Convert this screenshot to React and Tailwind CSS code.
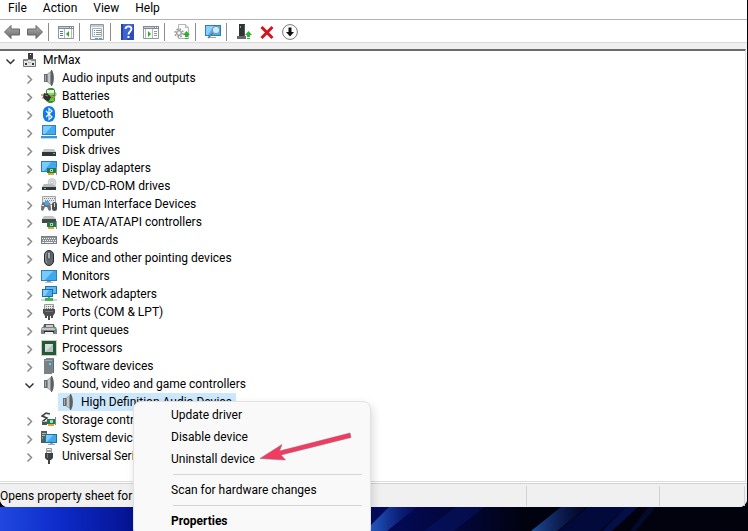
import React, { useState } from 'react';

const Svg = ({ children }) => (
  <svg viewBox="0 0 16 16" className="w-4 h-4 shrink-0" aria-hidden="true">
    {children}
  </svg>
);

const ComputerRootIcon = () => (
  <Svg>
    <path d="M6 1h5v6H6z" fill="#3c3f42" />
    <path d="M8 2h1v1H8z" fill="#e8e8e8" />
    <path d="M1.500 7.500h12v7h-12z" fill="#e4e4e4" stroke="#777" />
    <path d="M2 7h4v2H2zM9 7h4v2H9z" fill="#8b8b8b" />
    <path d="M3 11h2v2H3zM10 11h2v2h-2z" fill="#333" />
    <path d="M6 10h3v1H6z" fill="#bbb" />
  </Svg>
);

const SpeakerIcon = () => (
  <Svg>
    <path d="M3 4h4v8H3z" fill="#666d72" />
    <path d="M4 5h1v6H4z" fill="#a8adb0" />
    <path d="M6 4l5-4v16l-5-4z" fill="#8c8f91" />
    <path d="M7 4l2-2v12l-2-2z" fill="#c4c6c8" />
    <path d="M10 0h1c2.500 4 2.500 12 0 16h-1z" fill="#5d6063" />
  </Svg>
);

const BatteryIcon = () => (
  <Svg>
    <path d="M5 2l3-2h4l2 2v11l-3 2H8l-3-2z" fill="#3f8d35" />
    <path d="M6 2h7v3H6z" fill="#e3efe0" />
    <path d="M7 5h6v2H7z" fill="#7dde4f" />
    <path d="M8 10h5v3H8z" fill="#67c83f" />
    <path d="M13 4c3 0 2 5 0 5" fill="none" stroke="#6a8b6a" />
    <path d="M0 7h4M1 10h3M8 9c3-3 4 1 6 0" stroke="#c79b50" strokeWidth="1.4" fill="none" />
    <path d="M3 5l4 1 3 3-2 4-4-1-2-3z" fill="#2f2f2f" />
    <path d="M4 7l3 1" stroke="#858585" />
  </Svg>
);

const BluetoothIcon = () => (
  <Svg>
    <rect x="2" y="0" width="12" height="16" rx="6" fill="#0a7be8" />
    <path d="M5 5l6 6-3 2.5v-11L11 5l-6 6" fill="none" stroke="#fff" strokeWidth="1.1" />
  </Svg>
);

const MonitorIcon = () => (
  <Svg>
    <path d="M0 2h16v11H0z" fill="#2b7fb6" />
    <path d="M1 3h14v9H1z" fill="#3fa9f0" />
    <path d="M1 3h11L4 12H1z" fill="#79caff" />
    <path d="M6 13h4v1H6z" fill="#8c9ba5" />
    <path d="M4 14h8v1H4z" fill="#b7c2c9" />
  </Svg>
);

const ComputerIcon = () => (
  <Svg>
    <path d="M1 1h14v10H1z" fill="#2b83bd" />
    <path d="M2 2h12v8H2z" fill="#42aaf0" />
    <path d="M2 2h9l-7 8H2z" fill="#7ccbff" />
    <path d="M0 12h16v2H0z" fill="#3b95d0" />
    <path d="M0 14h16v1H0z" fill="#b9dcf2" />
  </Svg>
);

const DiskIcon = () => (
  <Svg>
    <path d="M3 7h10l2 3H1z" fill="#c2c4c5" />
    <path d="M1 10h14v4H1z" fill="#333638" />
    <path d="M12 11h2v1h-2z" fill="#42d64a" />
  </Svg>
);

const CardPart = () => (
  <>
    <path d="M6 8h9v5H6z" fill="#1f7a4c" />
    <path d="M9 9h3v3H9z" fill="#9fd6b6" />
    <path d="M10 10h1v1h-1z" fill="#1c4d35" />
    <path d="M7 13h6v2H7z" fill="#e0a23a" />
    <path d="M15 7h1v8h-1z" fill="#8c969b" />
  </>
);

const DisplayIcon = () => (
  <Svg>
    <path d="M0 1h16v11H0z" fill="#2b7fb6" />
    <path d="M1 2h14v9H1z" fill="#3fa9f0" />
    <path d="M1 2h9L3 11H1z" fill="#79caff" />
    <CardPart />
  </Svg>
);

const DvdIcon = () => (
  <Svg>
    <circle cx="11" cy="4.5" r="4" fill="#d6dade" stroke="#b3b8bc" strokeWidth=".6" />
    <circle cx="11" cy="4.5" r="1.2" fill="#fff" stroke="#999" strokeWidth=".5" />
    <path d="M3 6h8l4 2v1H1z" fill="#b8babb" />
    <path d="M1 9h14v3H1z" fill="#333638" />
    <path d="M3 10h2v1H3z" fill="#42d64a" />
  </Svg>
);

const HidIcon = () => (
  <Svg>
    <path d="M1.500.5h13v8h-13z" fill="#e6e7e8" stroke="#a0a4a6" />
    <path d="M3 2.500h11M4 4.500h9" stroke="#85898c" strokeDasharray="1 1" />
    <path d="M0 14c0-5 1-8 3-8 1 0 1 1 2 1s1-1 2-1c2 0 3 3 3 8l-2 1-2-4H4l-2 4z" fill="#6c7379" />
    <path d="M1 9h2v1H1z" fill="#e2e2e2" />
    <path d="M4 5h4v4H4z" fill="#3fa9f0" />
    <path d="M8 8h1v2H8z" fill="#e65a3e" />
    <rect x="11" y="6" width="5" height="9" rx="2.500" fill="#4a5056" />
    <path d="M13 7h1v4h-1z" fill="#d5d9dc" />
  </Svg>
);

const IdeIcon = () => (
  <Svg>
    <path d="M3 2h9l3 3H1z" fill="#c2c4c5" />
    <path d="M1 5h14v4H1z" fill="#45484a" />
    <CardPart />
  </Svg>
);

const KeyboardIcon = () => (
  <Svg>
    <path d="M0 4h16v8H0z" fill="#777d81" />
    <path d="M1 5h14v6H1z" fill="#8b9195" />
    <path d="M1 6.5h14M2 8.5h13" stroke="#f0f0f0" strokeDasharray="1 1" />
    <path d="M1 10h2v1H1zM4 10h8v1H4zM13 10h2v1h-2z" fill="#f0f0f0" />
  </Svg>
);

const MouseIcon = () => (
  <Svg>
    <rect x="3.5" y=".5" width="9" height="15" rx="4.5" fill="#62686d" stroke="#272a2d" />
    <path d="M6 2.5C4 5 4 11 6 13" stroke="#9da3a8" fill="none" />
    <rect x="7" y="2" width="2" height="7" rx="1" fill="#e4edf5" stroke="#202326" strokeWidth=".6" />
  </Svg>
);

const NetworkIcon = () => (
  <Svg>
    <path d="M4 0h12v8H4z" fill="#2177ad" />
    <path d="M5 1h10v6H5z" fill="#5bb9f7" />
    <path d="M1 3h11v8H1z" fill="#1d6d9f" />
    <path d="M2 4h9v6H2z" fill="#49abed" />
    <path d="M2 4h6l-4 6H2z" fill="#7fcdff" />
    <path d="M7 11h2v2H7z" fill="#58b868" />
    <path d="M0 13h16v2H0z" fill="#d1d5d6" />
    <path d="M4 12h8v3H4z" fill="#43b154" />
  </Svg>
);

const PortIcon = () => (
  <Svg>
    <path d="M3.5.5h9v5h-9z" fill="#e9e9e9" stroke="#999" />
    <path d="M5 2.5h7M5 4.5h7" stroke="#777" strokeDasharray="1 1" />
    <path d="M2 5h12v4l-2 3H4L2 9z" fill="#4c4f51" />
    <path d="M4 7h8v1H4z" fill="#777" />
    <path d="M4 12h2v2H4zM10 12h2v2h-2zM7 12h2v4H7z" fill="#4c4f51" />
  </Svg>
);

const PrinterIcon = () => (
  <Svg>
    <path d="M3 2h10l1 4H2z" fill="#585c5f" />
    <path d="M5 3h7v2H5z" fill="#c9ced1" />
    <path d="M1 5h14l1 3v4H0V8z" fill="#7b8185" />
    <path d="M1 6h13v2H1z" fill="#c1c5c7" />
    <path d="M3 9h10v3H3z" fill="#26292b" />
    <path d="M4 10h8l1 3H3z" fill="#f2f2f2" />
    <path d="M13 6h2v1h-2z" fill="#39d34c" />
  </Svg>
);

const CpuIcon = () => (
  <Svg>
    <rect x=".5" y=".5" width="15" height="15" fill="none" stroke="#b59a55" strokeDasharray="1 1" />
    <path d="M1 1h14v14H1z" fill="#1d5a40" />
    <path d="M4 4h8v8H4z" fill="#d9dedb" />
    <path d="M12 4v8H4z" fill="#b9c3be" />
  </Svg>
);

const SoftwareIcon = () => (
  <Svg>
    <path d="M5 0h8v15H5z" fill="#81888d" />
    <path d="M3 1h8v15H3z" fill="#7a8186" />
    <path d="M4 2h7v1H4z" fill="#a5abb0" />
    <path d="M12 1h1v14h-1z" fill="#62686c" />
    <path d="M8 5h2v2H8z" fill="#4ce0f3" />
  </Svg>
);

const StorageIcon = () => (
  <Svg>
    <path d="M9 2L5 1 1 4l5 2-4 3 3 1" fill="none" stroke="#3b3d3e" strokeWidth="1.5" />
    <path d="M9 3L5 2 3 4" fill="none" stroke="#ababab" strokeWidth=".8" />
    <path d="M1 10h5v3H1z" fill="#505456" />
    <path d="M2 9h4v1H2z" fill="#bbb" />
    <path d="M6 7h8v5H6z" fill="#1f7a4c" />
    <path d="M9 8h3v3H9z" fill="#a8dcbd" />
    <path d="M7 12h6v2H7z" fill="#e0a23a" />
    <path d="M14 5h1v8h-1z" fill="#7d868b" />
  </Svg>
);

const SystemIcon = () => (
  <Svg>
    <path d="M0 1h6v12H0z" fill="#565b5f" />
    <path d="M1 3h4v1H1zM1 5h4v1H1z" fill="#b4b9bd" />
    <path d="M1 7h1v2H1z" fill="#3ed34c" />
    <path d="M4 4h12v9H4z" fill="#1f6e9f" />
    <path d="M5 5h10v7H5z" fill="#42a8ec" />
    <path d="M5 5h7l-6 7H5z" fill="#78caff" />
    <path d="M9 13h3v1H9zM7 14h7v1H7z" fill="#9aa7af" />
  </Svg>
);

const UsbIcon = () => (
  <Svg>
    <path d="M5.5.5h5v5h-5z" fill="#f1f1f1" stroke="#9b9b9b" />
    <path d="M6.500 2h1v2h-1zM8.500 2h1v2h-1z" fill="#555" />
    <path d="M4 5h8v5l-2 2H6l-2-2z" fill="#3f4244" />
    <path d="M6 6h1v4H6z" fill="#75797c" />
    <path d="M7 12h2v4H7z" fill="#3f4244" />
  </Svg>
);

/* Toolbar icons */
const ArrowShape = ({ id, d }) => (
  <Svg>
    <defs>
      <linearGradient id={id} x1="0" y1="0" x2="0" y2="1">
        <stop offset="0" stopColor="#b0b0b0" />
        <stop offset="1" stopColor="#686868" />
      </linearGradient>
    </defs>
    <path d={d} fill={`url(#${id})`} stroke="#666" strokeLinejoin="round" />
  </Svg>
);

const BackIcon = () => <ArrowShape id="back" d="M.5 8L7 1.500V5h8.500v6H7v3.500z" />;
const ForwardIcon = () => <ArrowShape id="forward" d="M15.500 8L9 1.500V5H.5v6H9v3.500z" />;

const WindowFrame = () => (
  <>
    <path d="M.5 2.500h15v12H.5z" fill="#fff" stroke="#8f979d" />
    <path d="M0 2h16v3H0z" fill="#7f8a94" />
    <path d="M1 3h10v1H1z" fill="#c4cdd4" />
    <path d="M12 3h1v1h-1zM14 3h1v1h-1z" fill="#fff" />
  </>
);

const ConsoleTreeIcon = () => (
  <Svg>
    <WindowFrame />
    <path d="M2 7h3v1H2zM2 9h3v1H2zM2 11h3v1H2z" fill="#4d7fae" />
    <path d="M6 5h1v9H6zM13 5h1v9h-1z" fill="#b5bbc0" />
    <path d="M11 7v6L8 10z" fill="#37a52f" />
  </Svg>
);

const ActionPaneIcon = () => (
  <Svg>
    <WindowFrame />
    <path d="M11 7h3v1h-3zM11 9h3v1h-3zM11 11h3v1h-3z" fill="#8f979d" />
    <path d="M9 5h1v9H9zM2 5h1v9H2z" fill="#b5bbc0" />
    <path d="M5 7v6l3-3z" fill="#37a52f" />
  </Svg>
);

const PropertiesIcon = () => (
  <Svg>
    <path d="M1.500.5h13v15h-13z" fill="#f4f6f7" stroke="#8f979d" />
    <path d="M2 1h12v2H2z" fill="#c3ccd3" />
    <path d="M3.500 4.500h9v8h-9z" fill="#fff" stroke="#aab2b8" />
    <path d="M5 6h1v1H5zM5 8h1v1H5zM5 10h1v1H5z" fill="#3e8fd0" />
    <path d="M7 6h5v1H7zM7 8h5v1H7zM7 10h5v1H7z" fill="#8f979d" />
    <path d="M6 14h3v1H6zM10 14h3v1h-3z" fill="#3ea5c9" />
  </Svg>
);

const HelpIcon = () => (
  <Svg>
    <path d="M1 0h13v16H1z" fill="#2443ad" />
    <path d="M3 0h11v16H3z" fill="#3d63d0" />
    <path d="M14 0v16H7z" fill="#2c4dbb" />
    <path d="M5.500 5c0-3.500 6-3.500 6 0 0 2.500-3 2.500-3 5.500" fill="none" stroke="#fff" strokeWidth="1.800" />
    <path d="M7.500 12h2v2h-2z" fill="#fff" />
  </Svg>
);

const UpArrow = () => (
  <>
    <path d="M12.500 7L16 11h-2v2h-3v-2H9z" fill="#2cb12f" />
    <path d="M11 14h3v1h-3z" fill="#2cb12f" />
  </>
);

const UpdateIcon = () => (
  <Svg>
    <path d="M4.500.5h7l3 3v11h-10z" fill="#fafafa" stroke="#b5b5b5" />
    <path d="M11.500.5v3h3" fill="#ddd" stroke="#b5b5b5" />
    <circle cx="5" cy="9" r="4" fill="none" stroke="#999" strokeWidth="1.500" strokeDasharray="1.600 1.540" />
    <circle cx="5" cy="9" r="2.600" fill="#ccc" stroke="#999" />
    <circle cx="5" cy="9" r="1" fill="#fff" />
    <UpArrow />
  </Svg>
);

const ScanIcon = () => (
  <Svg>
    <path d="M0 1h16v11H0z" fill="#2b7fb6" />
    <path d="M1 2h14v9H1z" fill="#4ab0f2" />
    <path d="M1 2h8L3 11H1z" fill="#8ad1ff" />
    <path d="M3 13h8v1H3z" fill="#9aa7af" />
    <path d="M8 9l-5 5" stroke="#607c8d" strokeWidth="1.600" />
    <circle cx="11" cy="6" r="3.700" fill="#c9eaff" stroke="#7594a6" />
  </Svg>
);

const EnableIcon = () => (
  <Svg>
    <path d="M3 0h6v12H3z" fill="#303234" />
    <path d="M1 12h9v3H1z" fill="#66696b" />
    <path d="M4 2h1v2H4z" fill="#35d64a" />
    <path d="M8 1h1v11H8z" fill="#55585a" />
    <UpArrow />
  </Svg>
);

const RemoveIcon = () => (
  <Svg>
    <path d="M2.500 3l11 11M13.500 3l-11 11" stroke="#d5121e" strokeWidth="3" />
  </Svg>
);

const DownIcon = () => (
  <Svg>
    <circle cx="8" cy="8" r="7.400" fill="#fff" stroke="#777" />
    <path d="M6.500 3.500h3V8H12l-4 4.500L4 8h2.500z" fill="#111" />
  </Svg>
);

const Chevron = ({ open }) => (
  <svg viewBox="0 0 16 18" className="w-4 h-[18px] shrink-0" fill="none" aria-hidden="true">
    {open ? (
      <path d="M4.500 8.500l4 4 4-4" stroke="#333" strokeWidth="1.500" />
    ) : (
      <path d="M6.500 6.500l4 4-4 4" stroke="#8c8c8c" strokeWidth="1.500" />
    )}
  </svg>
);

const menus = ['File', 'Action', 'View', 'Help'];

const toolGroups = [
  [['Back', BackIcon], ['Forward', ForwardIcon]],
  [['Show/Hide Console Tree', ConsoleTreeIcon]],
  [['Properties', PropertiesIcon]],
  [['Help', HelpIcon], ['Show/Hide Action Pane', ActionPaneIcon]],
  [['Update device driver', UpdateIcon]],
  [['Scan for hardware changes', ScanIcon]],
  [['Enable device', EnableIcon], ['Uninstall device', RemoveIcon], ['Add drivers', DownIcon]],
];

const categories = [
  { name: 'Audio inputs and outputs', Icon: SpeakerIcon },
  { name: 'Batteries', Icon: BatteryIcon },
  { name: 'Bluetooth', Icon: BluetoothIcon },
  { name: 'Computer', Icon: ComputerIcon },
  { name: 'Disk drives', Icon: DiskIcon },
  { name: 'Display adapters', Icon: DisplayIcon },
  { name: 'DVD/CD-ROM drives', Icon: DvdIcon },
  { name: 'Human Interface Devices', Icon: HidIcon },
  { name: 'IDE ATA/ATAPI controllers', Icon: IdeIcon },
  { name: 'Keyboards', Icon: KeyboardIcon },
  { name: 'Mice and other pointing devices', Icon: MouseIcon },
  { name: 'Monitors', Icon: MonitorIcon },
  { name: 'Network adapters', Icon: NetworkIcon },
  { name: 'Ports (COM & LPT)', Icon: PortIcon },
  { name: 'Print queues', Icon: PrinterIcon },
  { name: 'Processors', Icon: CpuIcon },
  { name: 'Software devices', Icon: SoftwareIcon },
  { name: 'Sound, video and game controllers', Icon: SpeakerIcon, device: 'High Definition Audio Device' },
  { name: 'Storage controllers', Icon: StorageIcon },
  { name: 'System devices', Icon: SystemIcon },
  { name: 'Universal Serial Bus controllers', Icon: UsbIcon },
];

const TreeRow = ({ name, Icon, open, leaf, selected, onClick }) => (
  <button onClick={onClick} className="flex items-center h-[18px] whitespace-nowrap">
    {leaf ? <span className="w-4" /> : <Chevron open={open} />}
    <span className={`flex items-center h-[18px] ml-[2px] pl-[2px] pr-1 gap-[5px] ${selected ? 'bg-[#cce8ff]' : ''}`}>
      <Icon />
      {name}
    </span>
  </button>
);

const MenuItem = ({ children, bold }) => (
  <button
    role="menuitem"
    className={`block w-full h-[22px] pl-[37px] text-left hover:bg-[#f0f0f0] ${bold ? 'font-bold' : ''}`}
  >
    {children}
  </button>
);

const MenuLine = () => <div role="separator" className="h-px my-1 ml-[39px] mr-2 bg-[#d4d4d4]" />;

const ContextMenu = () => (
  <div
    role="menu"
    className="absolute z-10 left-[93px] top-2 w-[238px] pt-[2px] pb-1 bg-[#f9f9f9] border border-[#e2e2e2] rounded-lg shadow-[2px_4px_10px_rgba(0,0,0,0.14)]"
  >
    <MenuItem>Update driver</MenuItem>
    <MenuItem>Disable device</MenuItem>
    <MenuItem>Uninstall device</MenuItem>
    <MenuLine />
    <MenuItem>Scan for hardware changes</MenuItem>
    <MenuLine />
    <MenuItem bold>Properties</MenuItem>
    {/* pointer to the uninstall entry */}
    <svg viewBox="0 0 96 32" className="absolute left-[124px] top-[30px] w-24 h-8 pointer-events-none" aria-hidden="true">
      <path
        d="M2 26.500L24 12.500l-2.500 6.500L92 1l1 4.500L23 23l4.500 5z"
        fill="#f23b60"
        stroke="#8d6070"
        strokeWidth=".5"
      />
    </svg>
  </div>
);

const Wallpaper = () => (
  <svg viewBox="0 0 748 24" preserveAspectRatio="none" className="block w-full h-6 shrink-0" aria-hidden="true">
    <defs>
      <linearGradient id="sky">
        <stop offset="0" stopColor="#1f48df" />
        <stop offset=".08" stopColor="#0d2bc9" />
        <stop offset=".18" stopColor="#04128f" />
        <stop offset=".5" stopColor="#030b5c" />
        <stop offset=".62" stopColor="#020638" />
        <stop offset=".7" stopColor="#01020f" />
        <stop offset="1" stopColor="#01020c" />
      </linearGradient>
      <linearGradient id="streak">
        <stop offset="0" stopColor="#2d6fd8" />
        <stop offset="1" stopColor="#0a1f8a" stopOpacity=".2" />
      </linearGradient>
    </defs>
    <path d="M0 0h748v24H0z" fill="url(#sky)" />
    <path d="M389 0h28l-30 24h-22z" fill="url(#streak)" />
    <path d="M456 0h28l-30 24h-30z" fill="#0b2285" opacity=".3" />
    <path d="M561 0h26l-30 24h-26z" fill="url(#streak)" opacity=".7" />
    <path d="M588 0h38l-26 24h-42z" fill="#020a3c" />
    <path d="M626 0h12l-26 24h-10z" fill="#040f48" />
    <path d="M648 0h8l-20 24h-6z" fill="#030a2c" />
  </svg>
);

export default function App() {
  const [rootOpen, setRootOpen] = useState(true);
  const [soundOpen, setSoundOpen] = useState(true);

  return (
    <div className="h-screen flex flex-col overflow-hidden bg-[#01020c] font-['Roboto',sans-serif] text-xs leading-4 text-black">
      <div className="flex-1 flex flex-col min-h-0 mr-px bg-white rounded-b-lg">
        <nav className="flex h-5 pl-2 gap-4 border-b border-[#b2b2b8]">
          {menus.map((m) => (
            <button key={m} className="h-4">{m}</button>
          ))}
        </nav>

        <div role="toolbar" className="flex items-center h-[23px] pt-px border-b border-[#d9d9d9]">
          {toolGroups.map((group, i) => (
            <React.Fragment key={i}>
              {i > 0 && (
                <div className="w-2 pl-[2px]">
                  <div className="w-px h-[18px] bg-[#8c8c8c]" />
                </div>
              )}
              {group.map(([label, Icon]) => (
                <button key={label} aria-label={label} title={label} className="w-[23px] h-[22px] flex items-center justify-center">
                  <Icon />
                </button>
              ))}
            </React.Fragment>
          ))}
        </div>
        <div className="h-[6px] bg-[#f0f0f0]" />

        <main className="flex-1 min-h-0 mr-px border-t-2 border-r border-b border-t-[#6c6c6c] border-r-[#dcdcdc] border-b-[#dcdcdc]">
          <ul className="pl-[2px]">
            <li>
              <TreeRow name="MrMax" Icon={ComputerRootIcon} open={rootOpen} onClick={() => setRootOpen(!rootOpen)} />
              {rootOpen && (
                <ul className="pl-[19px]">
                  {categories.map(({ name, Icon, device }) => (
                    <li key={name}>
                      <TreeRow
                        name={name}
                        Icon={Icon}
                        open={device && soundOpen}
                        onClick={device ? () => setSoundOpen(!soundOpen) : undefined}
                      />
                      {device && soundOpen && (
                        <div className="relative ml-[19px]">
                          <TreeRow name={device} Icon={SpeakerIcon} leaf selected />
                          <ContextMenu />
                        </div>
                      )}
                    </li>
                  ))}
                </ul>
              )}
            </li>
          </ul>
        </main>

        <footer className="flex h-[24px] mt-px pt-px pr-[2px] bg-[#f0f0f0] border-t border-[#d2d2d2] rounded-b-lg">
          <span className="flex-1 my-px pt-[2px] border-r border-[#d2d2d2]">Opens property sheet for</span>
          <span className="w-[133px] my-px border-r border-[#d2d2d2]" />
          <span className="w-[85px] my-px border-r border-[#d2d2d2]" />
        </footer>
      </div>
      <Wallpaper />
    </div>
  );
}
